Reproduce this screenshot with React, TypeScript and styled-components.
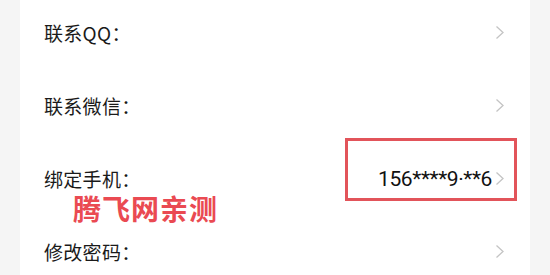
import React from "react";
import styled, { createGlobalStyle } from "styled-components";

const Global = createGlobalStyle`
  html, body { margin: 0; padding: 0; background: #f5f5f5; }
  body { font-family: "Noto Sans CJK SC", "Noto Sans", sans-serif; }
`;

const Page = styled.div`
  width: 550px;
  height: 275px;
  overflow: hidden;
  display: flex;
  justify-content: center;
  background: #f5f5f5;
`;

const Panel = styled.div`
  position: relative;
  width: 510px;
  background: #ffffff;
  display: flex;
  flex-direction: column;
  margin-top: -4px;
`;

const Row = styled.div`
  height: 73px;
  flex-shrink: 0;
  display: flex;
  align-items: center;
  padding: 0 25px 0 24px;
  box-sizing: border-box;
`;

const Label = styled.span`
  flex: 1;
  font-size: 19px;
  line-height: 24px;
  color: #1a1a1a;
  letter-spacing: 0.3px;
`;

const Value = styled.span`
  font-family: Roboto, "Noto Sans", sans-serif;
  font-size: 21px;
  line-height: 24px;
  letter-spacing: -0.4px;
  color: #111;
  margin-right: 3px;
`;

const Highlight = styled.div`
  position: absolute;
  left: 325px;
  top: 142px;
  width: 172px;
  height: 63px;
  border: 3px solid #e2545a;
  box-sizing: border-box;
  pointer-events: none;
`;

const Watermark = styled.div`
  position: absolute;
  left: 53px;
  top: 198px;
  font-size: 28px;
  font-weight: 700;
  color: #ea4a52;
  letter-spacing: 1px;
  line-height: 28px;
`;

const Chevron = () => (
  <svg width="10" height="15" viewBox="0 0 10 15" fill="none">
    <path d="M1.5 1.5 L8 7.5 L1.5 13.5" stroke="#c4c4c4" strokeWidth="1.3" />
  </svg>
);

const items: { label: string; value?: string }[] = [
  { label: "联系QQ：" },
  { label: "联系微信：" },
  { label: "绑定手机：", value: "156****9·**6" },
  { label: "修改密码：" },
];

export default function App() {
  return (
    <Page>
      <Global />
      <Panel>
        {items.map((it) => (
          <Row key={it.label}>
            <Label>{it.label}</Label>
            {it.value && <Value>{it.value}</Value>}
            <Chevron />
          </Row>
        ))}
        <Highlight />
        <Watermark>腾飞网亲测</Watermark>
      </Panel>
    </Page>
  );
}
